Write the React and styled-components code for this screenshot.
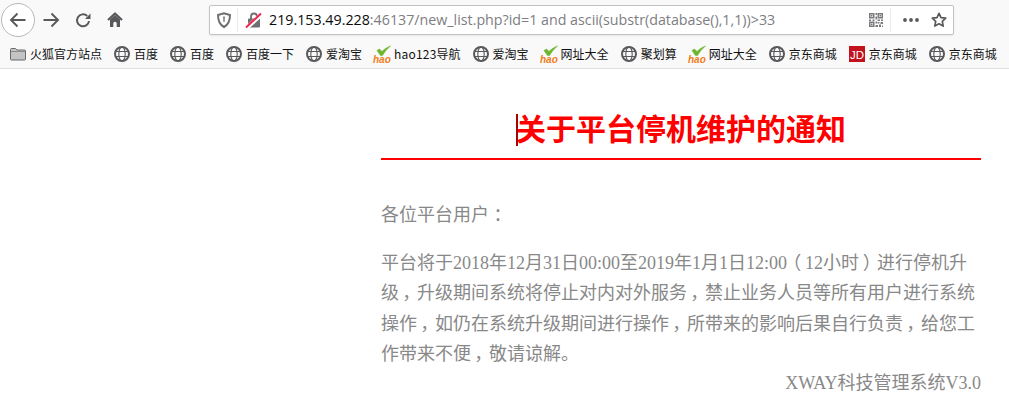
import React from "react";
import styled, { createGlobalStyle } from "styled-components";

const Global = createGlobalStyle`
  html, body { margin: 0; padding: 0; background: #fff; overflow: hidden; }
  #root { width: 1009px; height: 405px; overflow: hidden; }
`;

const Chrome = styled.header`
  background: #f9f9fa;
  border-bottom: 1px solid #e0e0e2;
  height: 69px;
  box-sizing: border-box;
  font-family: "Noto Sans CJK SC", "Noto Sans", sans-serif;
`;
const Toolbar = styled.div`
  height: 40px;
  display: flex;
  align-items: center;
  padding: 0 0 0 1px;
`;
const BackButton = styled.div`
  width: 32px;
  height: 32px;
  border: 1px solid #b8b8ba;
  border-radius: 50%;
  background: #fff;
  display: flex;
  align-items: center;
  justify-content: center;
  flex: none;
  margin-top: -1px;
`;
const NavButton = styled.div`
  width: 32px;
  height: 32px;
  display: flex;
  align-items: center;
  justify-content: center;
  flex: none;
  margin-right: ${p => p.$mr || 0}px;
`;
const UrlBar = styled.div`
  width: 745px;
  height: 30px;
  box-sizing: border-box;
  margin-top: -1px;
  padding-right: 6px;
  background: #fff;
  border: 1px solid #c3c3c5;
  border-radius: 2px;
  box-shadow: 0 1px 2px rgba(0,0,0,.08);
  display: flex;
  align-items: center;
`;
const Slot = styled.div`
  width: ${p => p.$w}px;
  margin-left: ${p => p.$ml || 0}px;
  flex: none;
  display: flex;
  align-items: center;
  justify-content: center;
`;
const Sep = styled.div`
  width: 1px;
  height: 24px;
  background: #ececee;
  flex: none;
  margin-left: ${p => p.$ml || 0}px;
`;
const Url = styled.div`
  flex: 1;
  margin-left: 9px;
  font-family: "Open Sans", "Noto Sans", sans-serif;
  font-size: 14.25px;
  color: #7d7d82;
  white-space: nowrap;
  overflow: hidden;
`;
const Host = styled.span`
  color: #0c0c0d;
`;
const Bookmarks = styled.div`
  height: 27px;
  display: flex;
  align-items: center;
  gap: 12px;
  padding-left: 10px;
  white-space: nowrap;
`;
const Bookmark = styled.div`
  display: flex;
  align-items: center;
  gap: 4px;
  font-size: 12px;
  color: #111;
  flex: none;
  line-height: 16px;
`;
const Latin = styled.span`
  letter-spacing: .2px;
`;
const Article = styled.main`
  width: 600px;
  margin-left: 381px;
  font-family: "Liberation Serif", "Noto Sans CJK SC", serif;
  color: #888;
  font-size: 18px;
`;
const Title = styled.h1`
  margin: 0;
  height: 91px;
  box-sizing: border-box;
  border-bottom: 2px solid #f00;
  padding-top: 39px;
  text-align: center;
  color: #f00;
  font-family: "Liberation Sans", "Noto Sans CJK SC", sans-serif;
  font-size: 30px;
  line-height: 44px;
  font-weight: 700;
`;
const Caret = styled.span`
  display: inline-block;
  width: 1.5px;
  height: 32px;
  background: #a00;
  vertical-align: -6px;
  margin-right: -1.5px;
`;
const Paragraph = styled.p`
  margin: ${p => p.$mt}px 0 0;
`;
const Line = styled.span`
  display: block;
  height: 30.6px;
  line-height: 30.6px;
  white-space: nowrap;
`;
const Mark = styled.span`
  display: inline-block;
  width: 1em;
  text-align: center;
  font-feature-settings: "palt";
`;
const Signature = styled.div`
  text-align: right;
  font-size: 18px;
  line-height: 24px;
  margin-top: 1px;
`;

const Svg = ({ s = 16, children }) => (
  <svg width={s} height={s} viewBox={`0 0 ${s} ${s}`} fill="none" style={{ overflow: "visible" }}>{children}</svg>
);
const Globe = () => (
  <Svg>
    <circle cx="8" cy="8" r="7" stroke="#59595c" strokeWidth="2" />
    <ellipse cx="8" cy="8" rx="3.2" ry="7" stroke="#59595c" strokeWidth="1.1" />
    <path d="M1.500 5.500h13M1.500 10.500h13" stroke="#59595c" strokeWidth="1.100" />
  </Svg>
);
const Folder = () => (
  <Svg>
    <path d="M.5 3.5a1 1 0 0 1 1-1h4l1.5 1.5h7.5a1 1 0 0 1 1 1v8a1 1 0 0 1-1 1h-13a1 1 0 0 1-1-1z" fill="#c4c4c4" stroke="#6b6b6b" />
    <path d="M1 5.500h14" stroke="#8a8a8a" />
  </Svg>
);
const Hao = () => (
  <Svg>
    <path d="M3 4.500L5.500 3 8 5.500C10 3.500 12.500 1.500 16.500 0 13 3 10.500 6 8.500 9.500H6.500z" fill="#6cb52d" stroke="#6cb52d" strokeWidth=".6" />
    <text x="-1" y="16.500" fontFamily="Liberation Sans, sans-serif" fontStyle="italic" fontWeight="700" fontSize="10" fill="#f07d1c">hao</text>
  </Svg>
);
const Jd = () => (
  <Svg>
    <rect width="16" height="16" fill="#c4121d" />
    <text x="8" y="12.500" textAnchor="middle" fontFamily="Liberation Sans, sans-serif" fontSize="11.500" fill="#fff">JD</text>
  </Svg>
);

const icons = { globe: Globe, folder: Folder, hao: Hao, jd: Jd };
const marks = [
  ["folder", "火狐官方站点"], ["globe", "百度"], ["globe", "百度"], ["globe", "百度一下"], ["globe", "爱淘宝"],
  ["hao", <span><Latin>hao123</Latin>导航</span>], ["globe", "爱淘宝"], ["hao", "网址大全"], ["globe", "聚划算"], ["hao", "网址大全"],
  ["globe", "京东商城"], ["jd", "京东商城"], ["globe", "京东商城"],
];

const Prose = ({ text }) => (
  <Line>
    {text.split(/([，（）：])/).map((part, i) =>
      /^[，（）：]$/.test(part) ? <Mark key={i}>{part}</Mark> : part
    )}
  </Line>
);
const lines = [
  "平台将于2018年12月31日00:00至2019年1月1日12:00（12小时）进行停机升",
  "级，升级期间系统将停止对内对外服务，禁止业务人员等所有用户进行系统",
  "操作，如仍在系统升级期间进行操作，所带来的影响后果自行负责，给您工",
  "作带来不便，敬请谅解。",
];

export default function App() {
  return (
    <>
      <Global />
      <Chrome>
        <Toolbar>
          <BackButton>
            <Svg s={18}>
              <path d="M16.500 9H2.500M8.500 2.500L2 9l6.500 6.500" stroke="#59595c" strokeWidth="1.900" />
            </Svg>
          </BackButton>
          <NavButton>
            <Svg s={18}>
              <path d="M1.500 9h14M9.500 2.500L16 9l-6.500 6.500" stroke="#59595c" strokeWidth="1.900" />
            </Svg>
          </NavButton>
          <NavButton>
            <Svg>
              <path d="M14 9a6 6 0 1 1-1.800-5" stroke="#59595c" strokeWidth="2" />
              <path d="M15.500 1.500V7H10z" fill="#59595c" />
            </Svg>
          </NavButton>
          <NavButton $mr={78}>
            <Svg>
              <path d="M1 8l7-6.500L15 8" stroke="#59595c" strokeWidth="2.200" strokeLinejoin="round" />
              <path d="M3 7.500L8 3l5 4.500V15H9.700v-3.500a1.700 1.700 0 0 0-3.400 0V15H3z" fill="#59595c" />
            </Svg>
          </NavButton>
          <UrlBar>
            <Slot $w={16} $ml={6}>
              <Svg>
                <path d="M2 3L8 1.200 14 3c0 5.500-1.200 9.500-6 12C3.200 12.500 2 8.500 2 3z" stroke="#6e6e72" strokeWidth="2" />
                <path d="M7 4.500h2L8.700 10H7.300z" fill="#8c8c90" />
              </Svg>
            </Slot>
            <Sep $ml={5} />
            <Slot $w={16} $ml={6}>
              <Svg>
                <rect x="4" y="6.500" width="12" height="9" rx="1" fill="#6f6f72" />
                <path d="M7 7V4.500a3 3 0 0 1 6 0V7" stroke="#6f6f72" strokeWidth="1.800" />
                <path d="M2 16.500L17.500 2.500" stroke="#fff" strokeWidth="4" />
                <path d="M2 15.500L17 1.500" stroke="#f0254c" strokeWidth="2" />
              </Svg>
            </Slot>
            <Url>
              <Host>219.153.49.228</Host>:46137/new_list.php?id=1 and ascii(substr(database(),1,1))&gt;33
            </Url>
            <Slot $w={16}>
              <Svg>
                <g fill="#7b7b7e">
                  <path d="M1 1h5.500v5.500H1zM2.500 2.500V5H5V2.500zM9.500 1H15v5.500H9.500zM11 2.500V5h2.500V2.500zM1 9.500h5.500V15H1zM2.500 11v2.500H5V11z" fillRule="evenodd" />
                  <path d="M3 3h1.500v1.500H3zM11.500 3H13v1.500h-1.500zM3 11.500h1.500V13H3zM7.500 1H9v2H7.500zM7.500 4.500H9v3H7.500zM1 7.500h2V9H1zM4.500 7.500h2V9h-2zM9.500 7.500H12V9H9.500zM13 7.500h2V9h-2zM7.500 9.500H9v2H7.500zM9.500 10h2v1.500h-2zM12.500 10H15v2h-2.500zM7.500 13H10v2H7.500zM11 12.500h2V15h-2zM14 13.500h1V15h-1z" />
                </g>
              </Svg>
            </Slot>
            <Sep $ml={6} />
            <Slot $w={16} $ml={12}>
              <Svg>
                <g fill="#59595c">
                  <circle cx="2" cy="8" r="1.900" />
                  <circle cx="8" cy="8" r="1.900" />
                  <circle cx="14" cy="8" r="1.900" />
                </g>
              </Svg>
            </Slot>
            <Slot $w={16} $ml={12}>
              <Svg>
                <path d="M8 1.300l2 4.300 4.700.6-3.400 3.200.9 4.700L8 11.800l-4.200 2.300.9-4.700L1.300 6.200 6 5.600z" stroke="#59595c" strokeWidth="1.700" strokeLinejoin="round" />
              </Svg>
            </Slot>
          </UrlBar>
        </Toolbar>
        <Bookmarks>
          {marks.map(([icon, label], i) => {
            const Icon = icons[icon];
            return (
              <Bookmark key={i}>
                <Icon />
                {label}
              </Bookmark>
            );
          })}
        </Bookmarks>
      </Chrome>
      <Article>
        <Title><Caret />关于平台停机维护的通知</Title>
        <Paragraph $mt={40}><Prose text="各位平台用户：" /></Paragraph>
        <Paragraph $mt={17}>
          {lines.map(l => <Prose key={l} text={l} />)}
        </Paragraph>
        <Signature>XWAY科技管理系统V3.0</Signature>
      </Article>
    </>
  );
}
